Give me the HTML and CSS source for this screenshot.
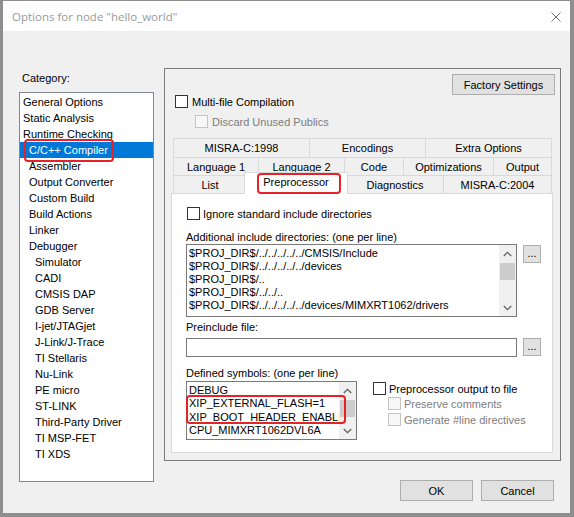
FILE: index.html
```html
<!DOCTYPE html>
<html>
<head>
<meta charset="utf-8">
<title>Options for node "hello_world"</title>
<link rel="stylesheet" href="styles.css">
</head>
<body>
<div class="window">
  <div class="titlebar">
    <span class="title">Options for node "hello_world"</span>
    <svg class="close" width="10" height="10" viewBox="0 0 10 10"><path d="M0.5 0.5L9.5 9.5M9.5 0.5L0.5 9.5" stroke="#707070" stroke-width="1" fill="none"/></svg>
  </div>
  <div class="body">
    <div class="leftcol">
      <div class="cat-label">Category:</div>
      <div class="listbox">
        <div class="item l0">General Options</div>
        <div class="item l0">Static Analysis</div>
        <div class="item l0">Runtime Checking</div>
        <div class="item l1 sel">C/C++ Compiler<span class="redbox rb-list"></span></div>
        <div class="item l1">Assembler</div>
        <div class="item l1">Output Converter</div>
        <div class="item l1">Custom Build</div>
        <div class="item l1">Build Actions</div>
        <div class="item l1">Linker</div>
        <div class="item l1">Debugger</div>
        <div class="item l2">Simulator</div>
        <div class="item l2">CADI</div>
        <div class="item l2">CMSIS DAP</div>
        <div class="item l2">GDB Server</div>
        <div class="item l2">I-jet/JTAGjet</div>
        <div class="item l2">J-Link/J-Trace</div>
        <div class="item l2">TI Stellaris</div>
        <div class="item l2">Nu-Link</div>
        <div class="item l2">PE micro</div>
        <div class="item l2">ST-LINK</div>
        <div class="item l2">Third-Party Driver</div>
        <div class="item l2">TI MSP-FET</div>
        <div class="item l2">TI XDS</div>
      </div>
    </div>
    <div class="rightcol">
      <div class="group">
        <div class="fs-row"><div class="btn fs-btn">Factory Settings</div></div>
        <div class="chk-row multi"><span class="chk"></span><span>Multi-file Compilation</span></div>
        <div class="chk-row discard disabled"><span class="chk dis"></span><span>Discard Unused Publics</span></div>
        <div class="tabs">
          <div class="tabrow r1">
            <div class="tab w136">MISRA-C:1998</div>
            <div class="tab w116">Encodings</div>
            <div class="tab w127">Extra Options</div>
          </div>
          <div class="tabrow">
            <div class="tab w85">Language 1</div>
            <div class="tab w86">Language 2</div>
            <div class="tab w59">Code</div>
            <div class="tab w90">Optimizations</div>
            <div class="tab w59">Output</div>
          </div>
          <div class="tabrow">
            <div class="tab w71">List</div>
            <div class="tab sel">Preprocessor<span class="redbox rb-tab"></span></div>
            <div class="tab w97">Diagnostics</div>
            <div class="tab w109">MISRA-C:2004</div>
          </div>
        </div>
        <div class="panel">
          <div class="chk-row ignore"><span class="chk"></span><span>Ignore standard include directories</span></div>
          <div class="lbl lbl-inc">Additional include directories: (one per line)</div>
          <div class="edit-row">
            <div class="edit inc">
              <div class="lines">
                <div>$PROJ_DIR$/../../../../../CMSIS/Include</div>
                <div>$PROJ_DIR$/../../../../../devices</div>
                <div>$PROJ_DIR$/..</div>
                <div>$PROJ_DIR$/../../..</div>
                <div>$PROJ_DIR$/../../../../../devices/MIMXRT1062/drivers</div>
              </div>
              <div class="vscroll">
                <div class="arrow"><svg width="9" height="6" viewBox="0 0 9 6"><path d="M0.8 5L4.5 1.3L8.2 5" fill="none" stroke="#606060" stroke-width="1.3"/></svg></div>
                <div class="track"><div class="thumb"></div></div>
                <div class="arrow"><svg width="9" height="6" viewBox="0 0 9 6"><path d="M0.8 1L4.5 4.7L8.2 1" fill="none" stroke="#606060" stroke-width="1.3"/></svg></div>
              </div>
            </div>
            <div class="btn dots dots-inc">...</div>
          </div>
          <div class="lbl lbl-pre">Preinclude file:</div>
          <div class="edit-row pre-row">
            <div class="edit pre"></div>
            <div class="btn dots">...</div>
          </div>
          <div class="lbl lbl-def">Defined symbols: (one per line)</div>
          <div class="sym-row">
            <div class="edit sym">
              <div class="lines symlines">
                <div>DEBUG</div>
                <div>XIP_EXTERNAL_FLASH=1</div>
                <div>XIP_BOOT_HEADER_ENABLE=1</div>
                <div>CPU_MIMXRT1062DVL6A</div>
              </div>
              <div class="vscroll">
                <div class="arrow"><svg width="9" height="6" viewBox="0 0 9 6"><path d="M0.8 5L4.5 1.3L8.2 5" fill="none" stroke="#606060" stroke-width="1.3"/></svg></div>
                <div class="track"><div class="thumb"></div></div>
                <div class="arrow"><svg width="9" height="6" viewBox="0 0 9 6"><path d="M0.8 1L4.5 4.7L8.2 1" fill="none" stroke="#606060" stroke-width="1.3"/></svg></div>
              </div>
              <span class="redbox rb-sym"></span>
            </div>
            <div class="ppopts">
              <div class="chk-row pp1"><span class="chk"></span><span>Preprocessor output to file</span></div>
              <div class="chk-row pp2 disabled"><span class="chk dis"></span><span>Preserve comments</span></div>
              <div class="chk-row pp3 disabled"><span class="chk dis"></span><span>Generate #line directives</span></div>
            </div>
          </div>
        </div>
      </div>
      <div class="dlg-buttons">
        <div class="btn dlg-btn">OK</div>
        <div class="btn dlg-btn">Cancel</div>
      </div>
    </div>
  </div>
</div>
</body>
</html>
```

FILE: styles.css
```css
html, body {
  margin: 0;
  padding: 0;
}
body {
  background: #8e8e8e;
  font-family: "Liberation Sans", Arial, sans-serif;
  font-size: 11px;
  color: #000;
  width: 574px;
  height: 517px;
  overflow: hidden;
}
.window {
  margin: 1px 4px 0 3px;
  width: 567px;
  height: 512px;
  background: #f0f0f0;
  display: flex;
  flex-direction: column;
}
.titlebar {
  height: 30px;
  flex: 0 0 30px;
  background: #fff;
  display: flex;
  align-items: center;
  justify-content: space-between;
  padding: 0 9px 0 9px;
}
.title {
  font-family: "Open Sans", "Noto Sans", sans-serif;
  font-size: 11.5px;
  color: #9a9a9a;
  margin-top: 1px;
}
.close {
  display: block;
  margin-top: 1px;
}
.body {
  display: flex;
  align-items: flex-start;
}
.leftcol {
  margin: 41px 0 0 16px;
  width: 135px;
}
.cat-label {
  height: 13px;
  line-height: 13px;
  padding-left: 3px;
}
.listbox {
  margin-top: 7px;
  height: 390px;
  border: 1px solid #828790;
  background: #fff;
  padding-top: 1px;
  box-sizing: border-box;
}
.item {
  height: 16px;
  line-height: 16px;
  white-space: nowrap;
}
.l0 { padding-left: 3px; }
.l1 { padding-left: 9px; }
.l2 { padding-left: 15px; }
.item.sel {
  background: #0078d7;
  color: #fff;
  position: relative;
}
.redbox {
  position: absolute;
  border: 2px solid #e52228;
  border-radius: 4px;
  box-sizing: border-box;
  pointer-events: none;
}
.rb-list { left: 4px; top: -3px; width: 90px; height: 23px; }
.rb-tab { left: 12px; top: 0; width: 84px; height: 21px; }
.rb-sym { left: -1px; top: 13px; width: 160px; height: 29px; }

.rightcol {
  margin: 37px 9px 0 10px;
  width: 397px;
}
.group {
  border: 1px solid #7a7a7a;
  height: 393px;
  box-sizing: border-box;
  padding: 5px 7px 0 6px;
}
.btn {
  background: #e1e1e1;
  border: 1px solid #adadad;
  box-sizing: border-box;
  display: flex;
  align-items: center;
  justify-content: center;
  white-space: nowrap;
}
.fs-row {
  display: flex;
  justify-content: flex-end;
  margin-right: -2px;
}
.fs-btn { width: 103px; height: 21px; }

.chk-row {
  display: flex;
  align-items: center;
  height: 13px;
  gap: 4px;
  white-space: nowrap;
}
.chk {
  width: 13px;
  height: 13px;
  flex: 0 0 13px;
  border: 1px solid #333;
  background: #fff;
  box-sizing: border-box;
}
.chk.dis {
  border-color: #c4c4c4;
  background: #f7f7f7;
}
.disabled { color: #7d7d7d; }
.multi { margin-left: 4px; }
.discard { margin-top: 7px; margin-left: 24px; }

.tabs {
  margin-top: 10px;
  margin-left: 2px;
  width: 379px;
}
.tabrow {
  display: flex;
  height: 18px;
}
.tabrow.r1 { height: 19px; }
.tab {
  border-top: 1px solid #d9d9d9;
  border-left: 1px solid #d9d9d9;
  box-sizing: border-box;
  display: flex;
  align-items: center;
  justify-content: center;
  background: #f0f0f0;
  white-space: nowrap;
}
.tab:last-child { border-right: 1px solid #d9d9d9; }
.w136 { width: 136px; }
.w116 { width: 116px; }
.w127 { width: 127px; }
.w85 { width: 85px; }
.w86 { width: 86px; }
.w59 { width: 59px; }
.w90 { width: 90px; }
.w71 { width: 73px; }
.w97 { width: 97px; }
.w109 { width: 109px; }
.tab.sel {
  width: 104px;
  height: 22px;
  margin: -3px -2px -1px -2px;
  background: #fff;
  border: 1px solid #d9d9d9;
  border-bottom: none;
  position: relative;
  z-index: 1;
  padding-bottom: 3px;
}

.panel {
  width: 382px;
  height: 260px;
  border: 1px solid #d9d9d9;
  background: #fff;
  box-sizing: border-box;
  padding: 12px 0 0 14px;
}
.ignore { margin: 1px 0 0 1px; gap: 3px; }
.lbl {
  height: 13px;
  line-height: 13px;
  white-space: nowrap;
}
.lbl-inc { margin-top: 11px; }
.lbl-pre { margin-top: 4px; }
.lbl-def { margin-top: 10px; }
.edit-row {
  display: flex;
  align-items: flex-start;
  gap: 6px;
}
.pre-row { margin-top: 4px; }
.edit {
  border: 1px solid #7a7a7a;
  background: #fff;
  box-sizing: border-box;
  display: flex;
  position: relative;
}
.edit.inc { width: 331px; height: 73px; }
.edit.pre { width: 331px; height: 19px; }
.edit.sym { width: 171px; height: 59px; }
.dots {
  width: 18px;
  height: 18px;
  align-items: flex-end;
  padding-bottom: 3px;
  line-height: 11px;
}
.dots-inc { margin-top: 1px; }
.lines {
  flex: 1;
  overflow: hidden;
  padding: 1.5px 0 0 2px;
  white-space: nowrap;
  line-height: 13.2px;
}
.symlines {
  padding-top: 1.5px;
  line-height: 13.5px;
}
.vscroll {
  width: 17px;
  flex: 0 0 17px;
  background: #f0f0f0;
  display: flex;
  flex-direction: column;
}
.arrow {
  height: 17px;
  flex: 0 0 17px;
  display: flex;
  align-items: center;
  justify-content: center;
}
.arrow svg { display: block; }
.track {
  flex: 1;
  padding-top: 1px;
}
.thumb {
  height: 17px;
  margin: 0 1px;
  background: #cdcdcd;
}
.sym-row {
  display: flex;
  align-items: flex-start;
  margin-top: 1px;
}
.ppopts {
  margin: 1px 0 0 16px;
}
.pp1 { gap: 3px; }
.pp2 { margin-top: 2px; margin-left: 15px; gap: 3px; }
.pp3 { margin-top: 3px; margin-left: 15px; gap: 3px; }

.dlg-buttons {
  display: flex;
  justify-content: flex-end;
  gap: 8px;
  margin-top: 19px;
  margin-right: 7px;
}
.dlg-btn { width: 73px; height: 21px; }
```
